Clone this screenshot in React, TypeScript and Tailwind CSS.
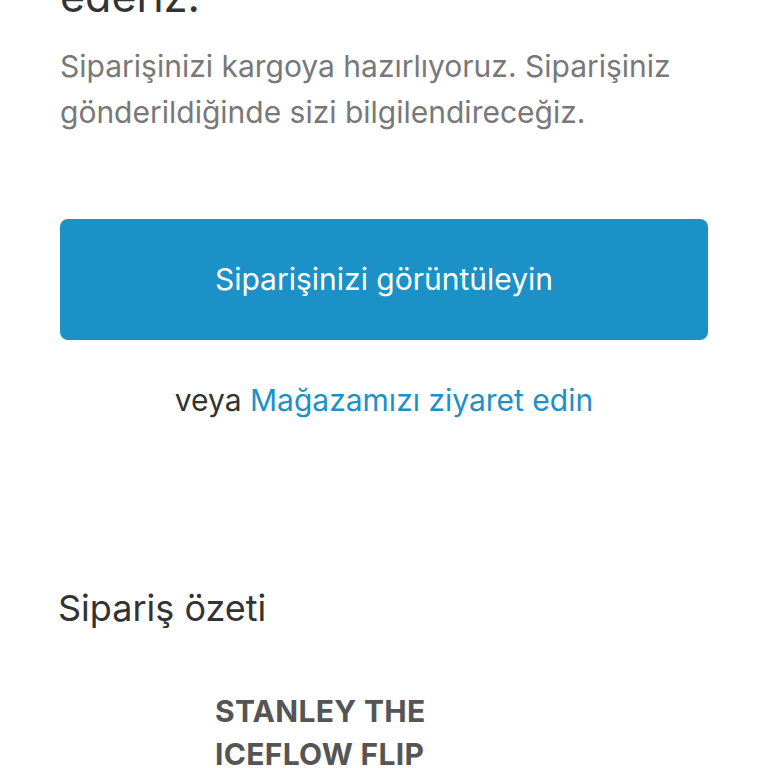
import React from 'react';

const App: React.FC = () => {
  return (
    <div
      className="w-[768px] h-[768px] overflow-hidden bg-white"
      style={{ fontFamily: 'Inter, "Liberation Sans", Arial, sans-serif' }}
    >
      <div className="px-[60px]">
        {/* Thank-you heading, scrolled partly off screen */}
        <h1 className="-mt-[79px] text-[43px] leading-[50px] text-[#333333]">
          Siparişiniz için teşekkür
          <br />
          ederiz.
        </h1>

        <p className="mt-[22px] text-[30px] leading-[46px] text-[#787878]">
          Siparişinizi kargoya hazırlıyoruz. Siparişiniz gönderildiğinde sizi bilgilendireceğiz.
        </p>

        <button className="mt-[84px] flex h-[121px] w-full items-center justify-center rounded-[8px] bg-[#1b91c8] text-[30px] text-white">
          Siparişinizi görüntüleyin
        </button>

        <div className="mt-[40px] text-center text-[30px] leading-[40px] text-[#333333]">
          veya <span className="text-[#1b91c8]">Mağazamızı ziyaret edin</span>
        </div>

        {/* Order summary */}
        <h2 className="mt-[166px] -ml-[2px] text-[36px] leading-[44px] text-[#333333]">
          Sipariş özeti
        </h2>

        <div className="mt-[60px] flex gap-[25px]">
          <div className="h-[130px] w-[130px] shrink-0" />
          <div className="w-[260px] text-[30px] font-bold leading-[43px] tracking-[0.01em] text-[#555555]">
            STANLEY THE ICEFLOW FLIP STRAW TUMBLER
          </div>
        </div>
      </div>
    </div>
  );
};

export default App;
